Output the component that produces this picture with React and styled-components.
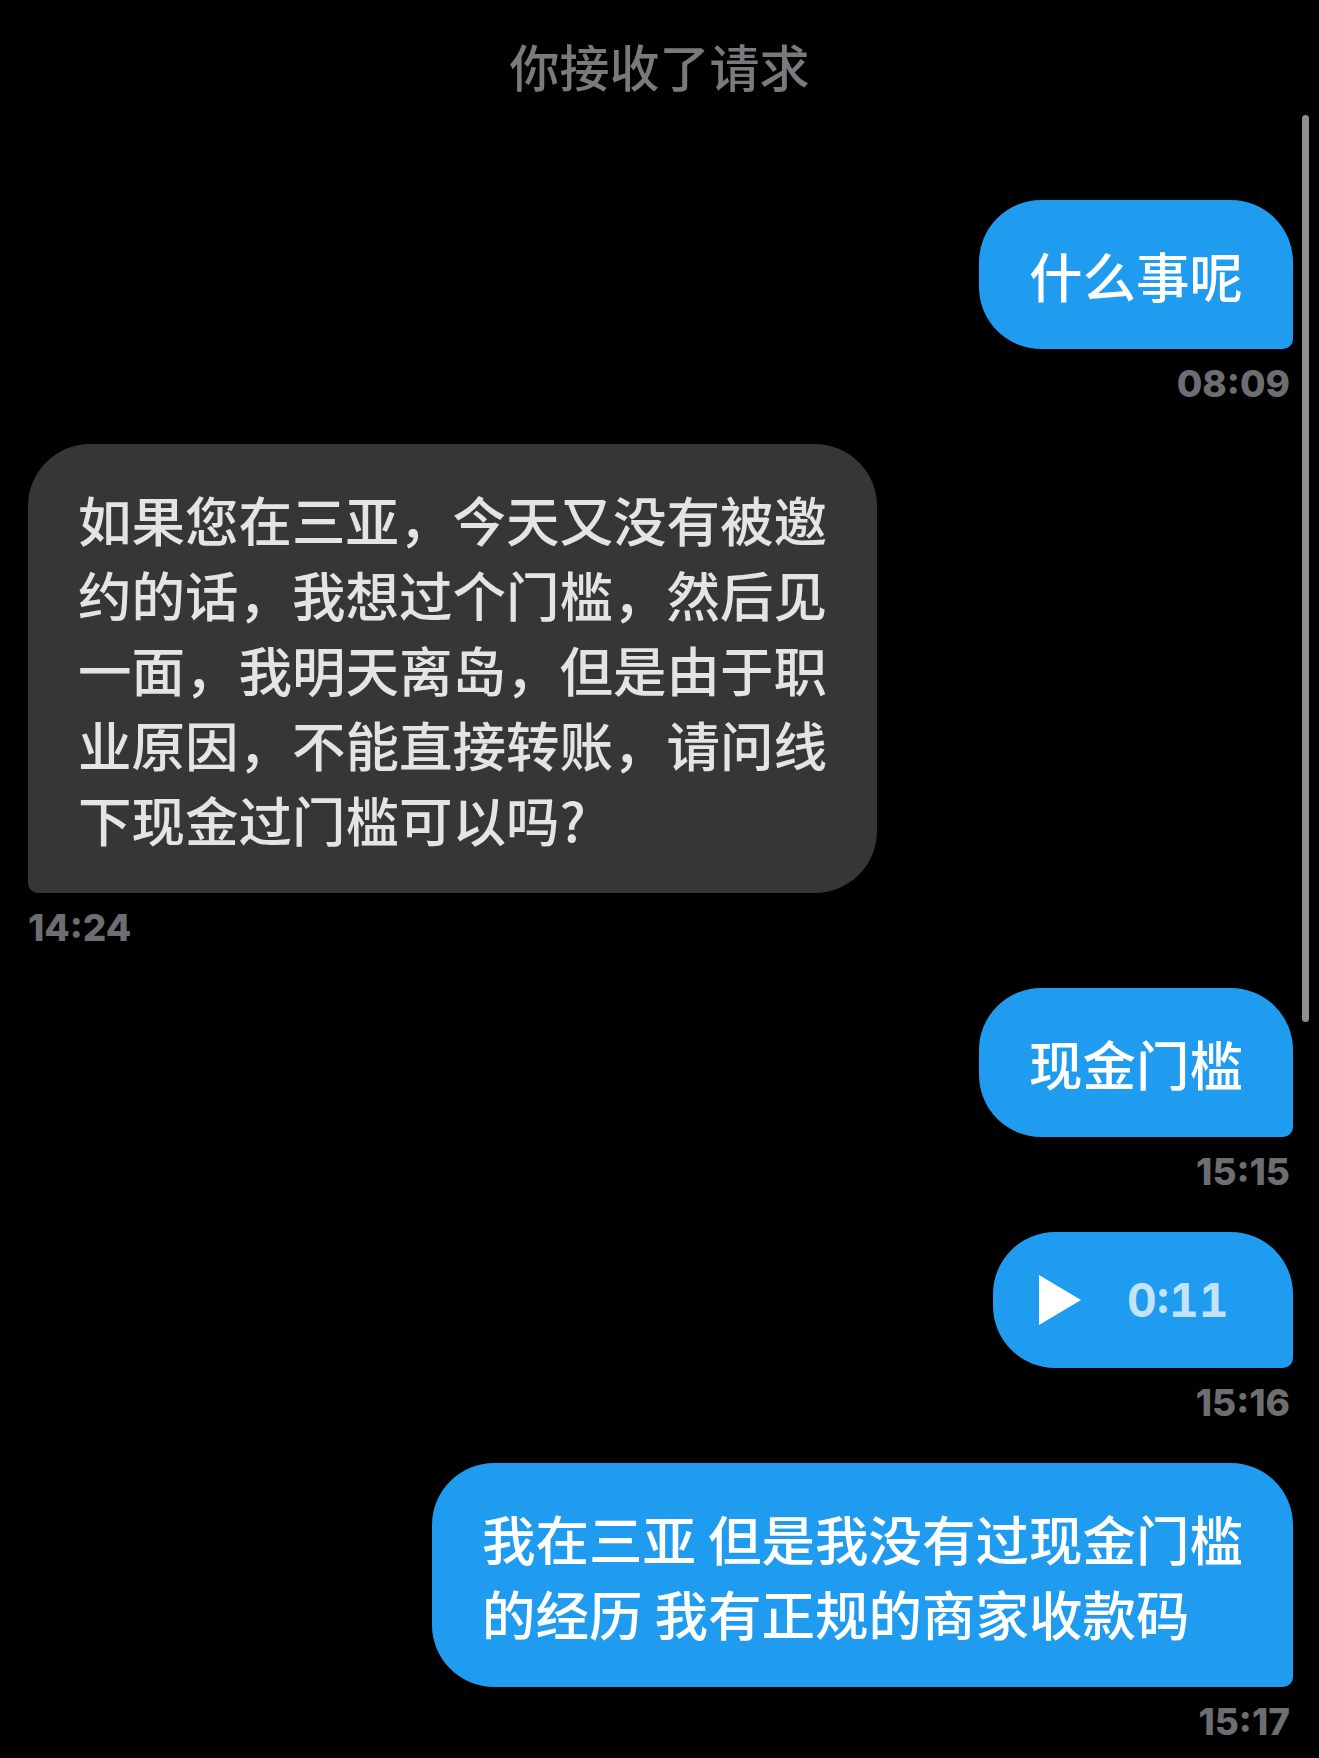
import React from 'react'
import styled, { createGlobalStyle } from 'styled-components'

const GlobalStyle = createGlobalStyle`
  html, body {
    margin: 0;
    padding: 0;
    background: #000;
  }
`

const messages = [
  { id: 1, mine: true, time: '08:09', lines: ['什么事呢'] },
  {
    id: 2,
    mine: false,
    time: '14:24',
    lines: [
      '如果您在三亚，今天又没有被邀',
      '约的话，我想过个门槛，然后见',
      '一面，我明天离岛，但是由于职',
      '业原因，不能直接转账，请问线',
      '下现金过门槛可以吗?',
    ],
  },
  { id: 3, mine: true, time: '15:15', lines: ['现金门槛'] },
  { id: 4, mine: true, time: '15:16', voice: '0:11' },
  {
    id: 5,
    mine: true,
    time: '15:17',
    lines: ['我在三亚 但是我没有过现金门槛', '的经历 我有正规的商家收款码'],
  },
]

const PlayIcon = () => (
  <svg width="42" height="50" viewBox="0 0 42 50">
    <polygon points="0,0 42,25 0,50" fill="#fff" />
  </svg>
)

const App = () => {
  return (
    <Screen>
      <GlobalStyle />
      <Header>
        <Title>你接收了请求</Title>
      </Header>
      <Thread>
        {messages.map((m) => (
          <Group key={m.id} $mine={m.mine}>
            {m.voice ? (
              <VoiceBubble>
                <PlayIcon />
                <Duration>{m.voice}</Duration>
              </VoiceBubble>
            ) : (
              <Bubble $mine={m.mine}>
                {m.lines.map((line, i) => (
                  <Line key={i}>{line}</Line>
                ))}
              </Bubble>
            )}
            <Time>{m.time}</Time>
          </Group>
        ))}
      </Thread>
      <Scrollbar />
    </Screen>
  )
}

export default App

const Screen = styled.div`
  position: relative;
  width: 1319px;
  height: 1758px;
  overflow: hidden;
  background: #000;
  font-family: 'Noto Sans CJK SC', 'Noto Sans', sans-serif;
`

const Header = styled.header`
  display: flex;
  align-items: center;
  justify-content: center;
  height: 130px;
`

const Title = styled.h1`
  margin: 0;
  font-size: 50px;
  font-weight: 500;
  line-height: 1;
  color: #7a7a7e;
`

const Thread = styled.main`
  display: flex;
  flex-direction: column;
  gap: 42px;
  padding: 70px 26px 0 28px;
`

const Group = styled.div`
  display: flex;
  flex-direction: column;
  align-items: ${(p) => (p.$mine ? 'flex-end' : 'flex-start')};
`

const Bubble = styled.div`
  padding: 37px 50px;
  border-radius: ${(p) => (p.$mine ? '62px 62px 10px 62px' : '62px 62px 62px 10px')};
  background: ${(p) => (p.$mine ? '#1f9bf0' : '#363638')};
  color: ${(p) => (p.$mine ? '#fff' : '#e4e4e6')};
  font-size: 53.5px;
  font-weight: 500;
  line-height: 75px;
`

const Line = styled.div`
  white-space: nowrap;
`

const VoiceBubble = styled.div`
  display: flex;
  align-items: center;
  gap: 46px;
  box-sizing: border-box;
  width: 300px;
  height: 136px;
  padding-left: 46px;
  border-radius: 62px 62px 10px 62px;
  background: #1f9bf0;
`

const Duration = styled.span`
  font-family: Inter, 'Liberation Sans', sans-serif;
  font-size: 46px;
  font-weight: 700;
  line-height: 1;
  color: #c3e3fb;
  font-variant-numeric: tabular-nums;
`

const Time = styled.div`
  margin-top: 16px;
  margin-right: 3px;
  font-family: Inter, 'Liberation Sans', sans-serif;
  font-size: 37px;
  font-weight: 800;
  line-height: 1;
  color: #6e6e72;
`

const Scrollbar = styled.div`
  position: absolute;
  top: 115px;
  left: 1302px;
  width: 7px;
  height: 907px;
  border-radius: 4px;
  background: #8e8e92;
`
